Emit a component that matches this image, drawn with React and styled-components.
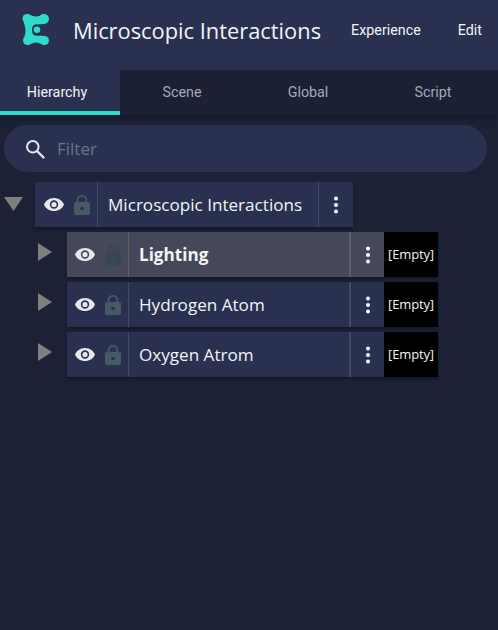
import React from "react";
import styled, { createGlobalStyle } from "styled-components";

const Global = createGlobalStyle`
  html, body { margin: 0; padding: 0; background: #1c2136; }
  body { width: 498px; height: 630px; overflow: hidden; font-family: "Open Sans", "Noto Sans", sans-serif; }
`;

const Page = styled.div`
  width: 498px;
  height: 630px;
  background: #1c2136;
  display: flex;
  flex-direction: column;
`;

const Header = styled.header`
  height: 70px;
  box-sizing: border-box;
  background: #2a3150;
  display: flex;
  align-items: center;
  padding: 0 16px 9px 21px;
`;

const Logo = styled.svg`
  width: 30px;
  height: 34px;
  flex: none;
`;

const Title = styled.h1`
  margin: 0 0 0 22px;
  font: 400 21.85px "Open Sans", sans-serif;
  color: #f2f4f7;
  white-space: nowrap;
  flex: 1;
`;

const MenuLink = styled.span`
  font: 400 14.3px Roboto, sans-serif;
  color: #f2f4f7;
  margin-left: ${(p) => p.$gap}px;
  padding-bottom: 2px;
`;

const Tabs = styled.nav`
  height: 45px;
  display: grid;
  grid-template-columns: 120px 124px 128px 126px;
  background: #1b2035;
  box-shadow: 0 3px 6px rgba(0, 0, 0, 0.22);
`;

const Tab = styled.div`
  box-sizing: border-box;
  display: flex;
  align-items: center;
  justify-content: center;
  padding-top: 3px;
  padding-right: ${(p) => p.$shift || 0}px;
  font: 400 14.3px Roboto, sans-serif;
  color: ${(p) => (p.$active ? "#f2f4f7" : "#a5a9b5")};
  background: ${(p) => (p.$active ? "#2a3150" : "transparent")};
  border-bottom: 4px solid ${(p) => (p.$active ? "#2fdccb" : "transparent")};
`;

const FilterBar = styled.div`
  height: 47px;
  margin: 10px 11px 0 4px;
  padding-left: 21px;
  box-sizing: border-box;
  border-radius: 24px;
  background: #2a3150;
  display: flex;
  align-items: center;
  gap: 12px;
`;

const FilterInput = styled.span`
  font: 400 17px "Open Sans", sans-serif;
  color: #6d7387;
`;

const Tree = styled.div`
  display: flex;
  flex-direction: column;
  gap: 5px;
  margin-top: 10px;
`;

const TreeLine = styled.div`
  display: flex;
  align-items: stretch;
  height: 45px;
  padding-left: ${(p) => p.$indent}px;
`;

const Toggle = styled.div`
  box-sizing: border-box;
  width: 31px;
  flex: none;
  display: flex;
  justify-content: flex-start;
  padding-left: ${(p) => p.$left}px;
  padding-top: ${(p) => p.$top}px;
`;

const Row = styled.div`
  display: flex;
  align-items: stretch;
  background: ${(p) => (p.$selected ? "#444859" : "#2a3150")};
  box-shadow: 0 2px 3px rgba(0, 0, 0, 0.3);
`;

const Vis = styled.div`
  width: ${(p) => p.$w}px;
  box-sizing: border-box;
  flex: none;
  display: flex;
  align-items: center;
  padding-left: ${(p) => p.$pad}px;
  gap: 10px;
  border-right: 1px solid ${(p) => (p.$selected ? "#5a5e70" : "#444a66")};
`;

const Label = styled.div`
  width: ${(p) => p.$w}px;
  box-sizing: border-box;
  padding-left: 10px;
  display: flex;
  align-items: center;
  font: ${(p) => (p.$selected ? 700 : 400)} 17.1px "Open Sans", sans-serif;
  color: #f2f4f7;
  white-space: nowrap;
  padding-bottom: 1px;
`;

const More = styled.div`
  width: ${(p) => p.$w}px;
  box-sizing: border-box;
  display: flex;
  align-items: center;
  justify-content: center;
  border-left: ${(p) => (p.$thick ? 2 : 1)}px solid ${(p) => (p.$selected ? "#5a5e70" : "#444a66")};
`;

const Slot = styled.div`
  width: 54px;
  background: #000;
  color: #f2f2f2;
  font: 400 13px "Open Sans", sans-serif;
  display: flex;
  align-items: center;
  justify-content: center;
  letter-spacing: -0.15px;
  white-space: nowrap;
  padding-bottom: 2px;
  box-sizing: border-box;
`;

const Eye = () => (
  <svg width="20" height="15" viewBox="0 0 20 14" aria-hidden="true">
    <path
      fillRule="evenodd"
      fill="#e6e8ee"
      d="M10 0.4C5.4 0.4 1.400 3.200 0 7c1.400 3.800 5.400 6.600 10 6.600S18.600 10.800 20 7C18.600 3.200 14.600 0.400 10 0.400zM10 11.200A4.200 4.200 0 1 1 10 2.800a4.200 4.200 0 0 1 0 8.400zM10 4.400a2.600 2.600 0 1 0 0 5.200 2.600 2.600 0 0 0 0-5.200z"
    />
  </svg>
);

const Lock = ({ color }) => (
  <svg width="16" height="20" viewBox="0 0 15 20" preserveAspectRatio="none" aria-hidden="true">
    <path
      fillRule="evenodd"
      fill={color}
      d="M7.5 0C4.7 0 2.6 2.2 2.6 5v2H1.8C0.8 7 0 7.8 0 8.8v9.4C0 19.2.8 20 1.8 20h11.4c1 0 1.8-.8 1.8-1.8V8.8C15 7.8 14.2 7 13.2 7h-.8V5C12.4 2.2 10.3 0 7.5 0zM4.3 7V5c0-1.8 1.4-3.3 3.2-3.3s3.2 1.5 3.2 3.3v2zM7.5 11.7a1.8 1.8 0 1 1 0 3.6 1.8 1.8 0 0 1 0-3.6z"
    />
  </svg>
);

const Dots = () => (
  <svg width="6" height="18" viewBox="0 0 6 18" aria-hidden="true">
    <circle cx="3" cy="2.5" r="2" fill="#fff" />
    <circle cx="3" cy="9" r="2" fill="#fff" />
    <circle cx="3" cy="15.5" r="2" fill="#fff" />
  </svg>
);

const Right = () => (
  <svg width="14" height="18" viewBox="0 0 14 18" aria-hidden="true">
    <path d="M0 0L14 9L0 18z" fill="#7f7f7f" />
  </svg>
);

const Down = () => (
  <svg width="19" height="14" viewBox="0 0 19 14" aria-hidden="true">
    <path d="M0 0H19L9.5 14z" fill="#7f7f7f" />
  </svg>
);

const children = [
  { name: "Lighting", selected: true, lock: "#37474f" },
  { name: "Hydrogen Atom", lock: "#455a64" },
  { name: "Oxygen Atrom", lock: "#455a64" },
];

export default function App() {
  return (
    <Page>
      <Global />
      <Header>
        <Logo viewBox="0 0 30 34" aria-hidden="true">
          <g fill="#2fdccb">
            <circle cx="23" cy="5" r="5" />
            <circle cx="6" cy="4.500" r="4.500" />
            <circle cx="6.500" cy="26.500" r="4.500" />
            <circle cx="23.500" cy="26.500" r="4.500" />
            <circle cx="16" cy="15.800" r="3.300" />
            <path d="M6 0C10 1 12 2.500 15 2.500S20 1 23 0V10C20 10.500 16 10 14 10.500S11 13 11 16 12 21 14 21.500 20 21.500 23.500 22V31C20 30 18 28.500 15 28.500S10 30 6.500 31L3 24C4 21 4.500 19 4.500 16S3 10 2 5z" />
          </g>
        </Logo>
        <Title>Microscopic Interactions</Title>
        <MenuLink $gap={0}>Experience</MenuLink>
        <MenuLink $gap={37}>Edit</MenuLink>
      </Header>
      <Tabs>
        <Tab $active $shift={6}>Hierarchy</Tab>
        <Tab>Scene</Tab>
        <Tab>Global</Tab>
        <Tab $shift={4}>Script</Tab>
      </Tabs>
      <FilterBar>
        <svg width="20" height="20" viewBox="0 0 20 20" aria-hidden="true">
          <circle cx="7.800" cy="7.800" r="5.800" fill="none" stroke="#e6e8ee" strokeWidth="2" />
          <path d="M12 12L18.500 18.500" stroke="#e6e8ee" strokeWidth="2.400" strokeLinecap="round" />
        </svg>
        <FilterInput>Filter</FilterInput>
      </FilterBar>
      <Tree>
        <TreeLine $indent={4}>
          <Toggle $left={0} $top={15}>
            <Down />
          </Toggle>
          <Row>
            <Vis $w={63} $pad={9}>
              <Eye />
              <Lock color="#455a64" />
            </Vis>
            <Label $w={220}>Microscopic Interactions</Label>
            <More $w={35}>
              <Dots />
            </More>
          </Row>
        </TreeLine>
        {children.map((c) => (
          <TreeLine key={c.name} $indent={36}>
            <Toggle $left={2} $top={11}>
              <Right />
            </Toggle>
            <Row $selected={c.selected}>
              <Vis $w={62} $pad={8} $selected={c.selected}>
                <Eye />
                <Lock color={c.lock} />
              </Vis>
              <Label $w={220} $selected={c.selected}>
                {c.name}
              </Label>
              <More $w={35} $thick $selected={c.selected}>
                <Dots />
              </More>
              <Slot>[Empty]</Slot>
            </Row>
          </TreeLine>
        ))}
      </Tree>
    </Page>
  );
}
